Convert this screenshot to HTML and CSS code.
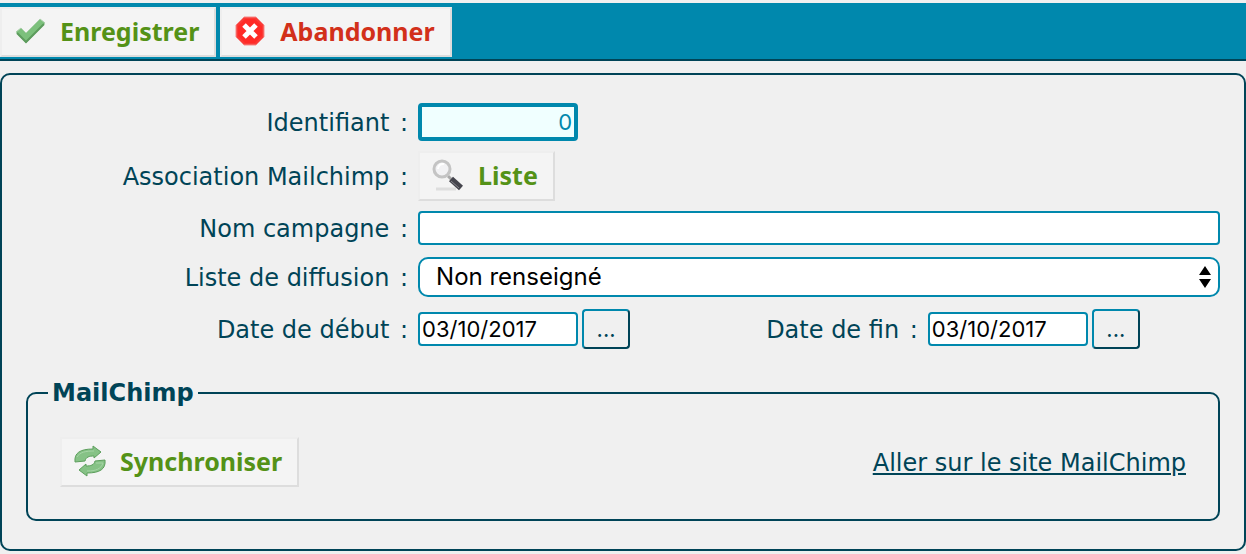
FILE: index.html
```html
<!DOCTYPE html>
<html lang="fr">
<head>
  <meta charset="UTF-8" />
  <title>Campagne</title>
  <meta name="viewport" content="width=device-width, initial-scale=1.0" />
  <link rel="stylesheet" href="styles.css">
</head>
<body>

  <header class="toolbar">
    <button type="submit" form="campagne" class="btn">
      <svg class="icon" viewBox="0 0 32 32" aria-hidden="true">
        <path d="M2 17l5-4 5 5L26 4l5 4-19 20z" fill="#7cc07c" stroke="#a9cfa9" stroke-width="1" stroke-linejoin="round"/>
        <path d="M3 18l9 9L30 9" fill="none" stroke="#5d9c5d" stroke-width="2"/>
      </svg>
      Enregistrer
    </button>
    <button type="button" class="btn btn-cancel">
      <svg class="icon" viewBox="0 0 32 32" aria-hidden="true">
        <path d="M10 2h12l8 8v12l-8 8H10l-8-8V10z" fill="#fb3a36" stroke="#f58a88" stroke-width="1"/>
        <path d="M11 4h10l7 7v10l-7 7H11l-7-7V11z" fill="#ff2a26"/>
        <path d="M10 10l12 12M22 10L10 22" stroke="#fff" stroke-width="5"/>
      </svg>
      Abandonner
    </button>
  </header>

  <form class="panel" id="campagne">
    <div class="row">
      <label for="identifiant">Identifiant <span class="colon">:</span></label>
      <div><input type="text" id="identifiant" class="text short ident" value="0" readonly /></div>
    </div>
    <div class="row row-assoc">
      <label for="association">Association Mailchimp <span class="colon">:</span></label>
      <div>
        <button type="button" id="association" class="btn">
          <svg class="icon" viewBox="0 0 32 32" aria-hidden="true">
            <path d="M4 30h20" stroke="#dedede" stroke-width="3"/>
            <path d="M16 17l4 4" stroke="#aaa" stroke-width="3"/>
            <path d="M19 20l10 9" stroke="#45454d" stroke-width="6"/>
            <path d="M19 22l8 7" stroke="#85858c" stroke-width="1"/>
            <circle cx="10" cy="10" r="8" fill="#f2f2f4" stroke="#c4c4c4" stroke-width="3"/>
            <path d="M6 10a5 5 0 0 1 6-5" fill="none" stroke="#fff" stroke-width="2"/>
          </svg>
          Liste
        </button>
      </div>
    </div>
    <div class="row row-nom">
      <label for="nom">Nom campagne <span class="colon">:</span></label>
      <input type="text" id="nom" class="text" />
    </div>
    <div class="row">
      <label for="diffusion">Liste de diffusion <span class="colon">:</span></label>
      <div class="select">
        <select id="diffusion">
          <option>Non renseigné</option>
        </select>
        <svg class="arrows" viewBox="0 0 12 22" aria-hidden="true">
          <path d="M6 0l6 9H0zM6 22l6-9H0z"/>
        </svg>
      </div>
    </div>
    <div class="row row-dates">
      <label for="debut">Date de début <span class="colon">:</span></label>
      <div class="dates">
        <div class="date">
          <input type="text" id="debut" class="text short" value="03/10/2017" />
          <button type="button" class="pick" aria-label="Choisir la date de début">...</button>
        </div>
        <label for="fin">Date de fin <span class="colon">:</span></label>
        <div class="date">
          <input type="text" id="fin" class="text short" value="03/10/2017" />
          <button type="button" class="pick" aria-label="Choisir la date de fin">...</button>
        </div>
      </div>
    </div>

    <fieldset class="group">
      <legend>MailChimp</legend>
      <div class="group-content">
        <button type="button" class="btn">
          <svg class="icon" viewBox="0 0 32 32" aria-hidden="true">
            <path d="M1 17C0 8 6 4 19 4V1l8 6-7 6v-2c-5 0-8 1-9 5z" fill="#86c286" stroke="#5d9f5d"/>
            <path d="M31 15c1 9-5 13-18 13v3l-8-6 7-6v2c5 0 8-1 9-5z" fill="#86c286" stroke="#5d9f5d"/>
            <path d="M3 12c3-5 9-6 17-6M22 18h7c-2 6-7 8-16 8" fill="none" stroke="#a6d5a6" stroke-width="1"/>
          </svg>
          Synchroniser
        </button>
        <a href="#">Aller sur le site MailChimp</a>
      </div>
    </fieldset>
  </form>

</body>
</html>
```
FILE: styles.css
```css
* {
  box-sizing: border-box;
}

body {
  margin: 0;
  padding-top: 3px;
  background: #f0f0f0;
  color: #004457;
  font-family: Verdana, "DejaVu Sans", sans-serif;
  font-size: 24px;
  line-height: 32px;
}

.toolbar {
  display: flex;
  gap: 4px;
  padding: 4px 0 2px;
  background: #0088ad;
  border-bottom: 2px solid #004457;
}

.btn {
  display: inline-flex;
  align-items: center;
  gap: 14px;
  height: 50px;
  padding: 0 15px 2px 12px;
  border: 2px solid;
  border-color: #eee #ddd #ddd #eee;
  background: #f4f4f4;
  color: #549217;
  font-family: "Lucida Grande", "Noto Sans", sans-serif;
  font-size: 25px;
  font-weight: bold;
  cursor: pointer;
}

.btn-cancel {
  color: #d2301a;
}

.icon {
  width: 32px;
  height: 32px;
}

.panel {
  margin-top: 12px;
  padding: 28px 24px;
  border: 2px solid #004457;
  border-radius: 10px;
}

.row {
  display: grid;
  grid-template-columns: 32% 1fr;
  gap: 10px;
  align-items: center;
  margin-bottom: 12px;
}

.row label {
  padding-top: 2px;
  text-align: right;
}

.colon {
  margin-left: 3px;
}

.row > div {
  display: flex;
}

.row-assoc {
  margin: -2px 0 10px;
}

.text {
  width: 100%;
  height: 34px;
  padding: 0 2px;
  border: 2px solid #0088ad;
  border-radius: 4px;
  background: #fff;
  color: #000;
  font-family: Inter, sans-serif;
  font-size: 22px;
}

.short {
  width: 160px;
}

.ident {
  height: 38px;
  border-width: 4px;
  background: #f0ffff;
  color: #0088ad;
  text-align: right;
}

.select {
  position: relative;
}

.select select {
  width: 100%;
  height: 40px;
  padding: 0 32px 2px 16px;
  border: 2px solid #0088ad;
  border-radius: 10px;
  background: #fff;
  color: #000;
  font-family: Inter, sans-serif;
  font-size: 24px;
  appearance: none;
}

.arrows {
  position: absolute;
  top: 9px;
  right: 9px;
  width: 12px;
  height: 22px;
  pointer-events: none;
}

.row .dates {
  display: grid;
  grid-template-columns: auto 1fr auto;
  gap: 10px;
  align-items: center;
  padding-right: 10%;
}

.date {
  display: flex;
  align-items: center;
  gap: 4px;
}

.pick {
  width: 48px;
  height: 40px;
  padding: 0;
  border: 2px solid;
  border-color: #0088ad #004457 #004457 #0088ad;
  border-radius: 4px;
  background: #f0f0f0;
  color: #004457;
  font-family: Inter, sans-serif;
  font-size: 22px;
  cursor: pointer;
}

.group {
  margin: 28px 0 0;
  padding: 0 32px 32px;
  border: 2px solid #004457;
  border-radius: 10px;
}

.group legend {
  margin-left: -12px;
  padding: 0 4px;
  font-weight: bold;
}

.group-content {
  display: flex;
  align-items: center;
  justify-content: space-between;
  padding-top: 28px;
}

.group a {
  padding-top: 2px;
  color: inherit;
}
```
